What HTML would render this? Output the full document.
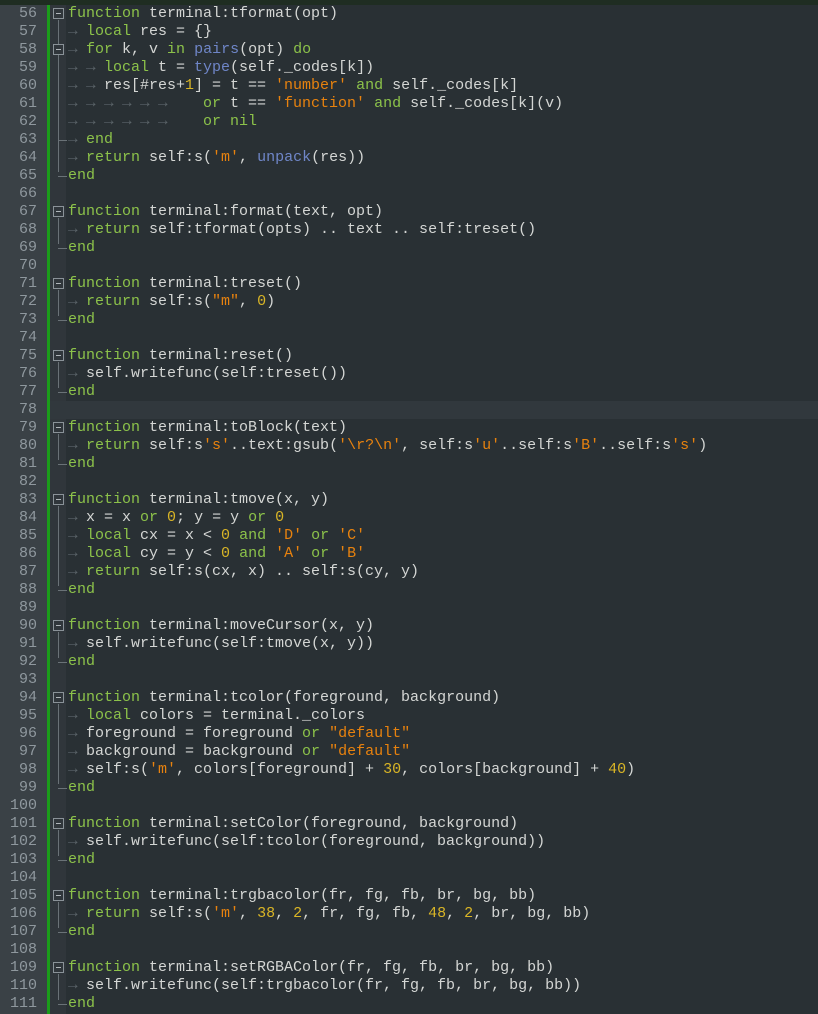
<!DOCTYPE html>
<html><head><meta charset="utf-8"><style>
body{margin:0;width:818px;height:1014px;background:#293034;overflow:hidden;position:relative;font-family:"Liberation Mono",monospace;font-size:15px}
#top{position:absolute;left:0;top:0;width:818px;height:5px;background:#1f2d22}
#gut{position:absolute;left:0;top:5px;width:47px;height:1009px;background:#3a4146}
#bar{position:absolute;left:47px;top:5px;width:3px;height:1009px;background:#1a9c1a}
#fold{position:absolute;left:50px;top:5px;width:16px;height:1009px;background:#30363b}
#hl{position:absolute;left:50px;top:401px;width:768px;height:18px;background:#31383d}
.r{position:absolute;left:0;height:18px;line-height:18px;white-space:pre;color:#d4d6d4}
.ln{position:absolute;left:0;width:37px;text-align:right;color:#8f989e}
.c{position:absolute;left:68px}
.k{color:#8cc24a}.s{color:#e8820e}.n{color:#d9b526}.b{color:#6f86c8}
.t{display:inline-block;width:18px;height:18px;line-height:17px;color:#5b6469;font-size:16px;overflow:hidden;vertical-align:top}
.bx{position:absolute;left:53px;width:9px;height:9px;border:1px solid #8a9298;background:#30363b}
.bx:after{content:"";position:absolute;left:2px;top:4px;width:5px;height:1px;background:#b0b6ba}
.vl{position:absolute;left:58px;width:1px;background:#6a7277}
.hz{position:absolute;left:58px;width:9px;height:1px;background:#6a7277}
</style></head><body>
<div id="top"></div><div id="gut"></div><div id="bar"></div><div id="fold"></div><div id="hl"></div>

<div class="vl" style="top:20px;height:152px"></div><div class="hz" style="top:176px"></div>
<div class="hz" style="top:140px"></div>
<div class="bx" style="top:8px"></div><div class="bx" style="top:44px"></div>

<div class="vl" style="top:218px;height:26px"></div><div class="hz" style="top:248px"></div><div class="bx" style="top:206px"></div>
<div class="vl" style="top:290px;height:26px"></div><div class="hz" style="top:320px"></div><div class="bx" style="top:278px"></div>
<div class="vl" style="top:362px;height:26px"></div><div class="hz" style="top:392px"></div><div class="bx" style="top:350px"></div>
<div class="vl" style="top:434px;height:26px"></div><div class="hz" style="top:464px"></div><div class="bx" style="top:422px"></div>
<div class="vl" style="top:506px;height:80px"></div><div class="hz" style="top:590px"></div><div class="bx" style="top:494px"></div>
<div class="vl" style="top:632px;height:26px"></div><div class="hz" style="top:662px"></div><div class="bx" style="top:620px"></div>
<div class="vl" style="top:704px;height:80px"></div><div class="hz" style="top:788px"></div><div class="bx" style="top:692px"></div>
<div class="vl" style="top:830px;height:26px"></div><div class="hz" style="top:860px"></div><div class="bx" style="top:818px"></div>
<div class="vl" style="top:902px;height:26px"></div><div class="hz" style="top:932px"></div><div class="bx" style="top:890px"></div>
<div class="vl" style="top:974px;height:26px"></div><div class="hz" style="top:1004px"></div><div class="bx" style="top:962px"></div>

<div class="r" style="top:5px"><span class="ln">56</span><span class="c"><span class="k">function</span> terminal:tformat(opt)</span></div>
<div class="r" style="top:23px"><span class="ln">57</span><span class="c"><span class="t">→</span><span class="k">local</span> res = {}</span></div>
<div class="r" style="top:41px"><span class="ln">58</span><span class="c"><span class="t">→</span><span class="k">for</span> k, v <span class="k">in</span> <span class="b">pairs</span>(opt) <span class="k">do</span></span></div>
<div class="r" style="top:59px"><span class="ln">59</span><span class="c"><span class="t">→</span><span class="t">→</span><span class="k">local</span> t = <span class="b">type</span>(self._codes[k])</span></div>
<div class="r" style="top:77px"><span class="ln">60</span><span class="c"><span class="t">→</span><span class="t">→</span>res[#res+<span class="n">1</span>] = t == <span class="s">'number'</span> <span class="k">and</span> self._codes[k]</span></div>
<div class="r" style="top:95px"><span class="ln">61</span><span class="c"><span class="t">→</span><span class="t">→</span><span class="t">→</span><span class="t">→</span><span class="t">→</span><span class="t">→</span>   <span class="k">or</span> t == <span class="s">'function'</span> <span class="k">and</span> self._codes[k](v)</span></div>
<div class="r" style="top:113px"><span class="ln">62</span><span class="c"><span class="t">→</span><span class="t">→</span><span class="t">→</span><span class="t">→</span><span class="t">→</span><span class="t">→</span>   <span class="k">or</span> <span class="k">nil</span></span></div>
<div class="r" style="top:131px"><span class="ln">63</span><span class="c"><span class="t">→</span><span class="k">end</span></span></div>
<div class="r" style="top:149px"><span class="ln">64</span><span class="c"><span class="t">→</span><span class="k">return</span> self:s(<span class="s">'m'</span>, <span class="b">unpack</span>(res))</span></div>
<div class="r" style="top:167px"><span class="ln">65</span><span class="c"><span class="k">end</span></span></div>
<div class="r" style="top:185px"><span class="ln">66</span></div>
<div class="r" style="top:203px"><span class="ln">67</span><span class="c"><span class="k">function</span> terminal:format(text, opt)</span></div>
<div class="r" style="top:221px"><span class="ln">68</span><span class="c"><span class="t">→</span><span class="k">return</span> self:tformat(opts) .. text .. self:treset()</span></div>
<div class="r" style="top:239px"><span class="ln">69</span><span class="c"><span class="k">end</span></span></div>
<div class="r" style="top:257px"><span class="ln">70</span></div>
<div class="r" style="top:275px"><span class="ln">71</span><span class="c"><span class="k">function</span> terminal:treset()</span></div>
<div class="r" style="top:293px"><span class="ln">72</span><span class="c"><span class="t">→</span><span class="k">return</span> self:s(<span class="s">"m"</span>, <span class="n">0</span>)</span></div>
<div class="r" style="top:311px"><span class="ln">73</span><span class="c"><span class="k">end</span></span></div>
<div class="r" style="top:329px"><span class="ln">74</span></div>
<div class="r" style="top:347px"><span class="ln">75</span><span class="c"><span class="k">function</span> terminal:reset()</span></div>
<div class="r" style="top:365px"><span class="ln">76</span><span class="c"><span class="t">→</span>self.writefunc(self:treset())</span></div>
<div class="r" style="top:383px"><span class="ln">77</span><span class="c"><span class="k">end</span></span></div>
<div class="r" style="top:401px"><span class="ln">78</span></div>
<div class="r" style="top:419px"><span class="ln">79</span><span class="c"><span class="k">function</span> terminal:toBlock(text)</span></div>
<div class="r" style="top:437px"><span class="ln">80</span><span class="c"><span class="t">→</span><span class="k">return</span> self:s<span class="s">'s'</span>..text:gsub(<span class="s">'\r?\n'</span>, self:s<span class="s">'u'</span>..self:s<span class="s">'B'</span>..self:s<span class="s">'s'</span>)</span></div>
<div class="r" style="top:455px"><span class="ln">81</span><span class="c"><span class="k">end</span></span></div>
<div class="r" style="top:473px"><span class="ln">82</span></div>
<div class="r" style="top:491px"><span class="ln">83</span><span class="c"><span class="k">function</span> terminal:tmove(x, y)</span></div>
<div class="r" style="top:509px"><span class="ln">84</span><span class="c"><span class="t">→</span>x = x <span class="k">or</span> <span class="n">0</span>; y = y <span class="k">or</span> <span class="n">0</span></span></div>
<div class="r" style="top:527px"><span class="ln">85</span><span class="c"><span class="t">→</span><span class="k">local</span> cx = x &lt; <span class="n">0</span> <span class="k">and</span> <span class="s">'D'</span> <span class="k">or</span> <span class="s">'C'</span></span></div>
<div class="r" style="top:545px"><span class="ln">86</span><span class="c"><span class="t">→</span><span class="k">local</span> cy = y &lt; <span class="n">0</span> <span class="k">and</span> <span class="s">'A'</span> <span class="k">or</span> <span class="s">'B'</span></span></div>
<div class="r" style="top:563px"><span class="ln">87</span><span class="c"><span class="t">→</span><span class="k">return</span> self:s(cx, x) .. self:s(cy, y)</span></div>
<div class="r" style="top:581px"><span class="ln">88</span><span class="c"><span class="k">end</span></span></div>
<div class="r" style="top:599px"><span class="ln">89</span></div>
<div class="r" style="top:617px"><span class="ln">90</span><span class="c"><span class="k">function</span> terminal:moveCursor(x, y)</span></div>
<div class="r" style="top:635px"><span class="ln">91</span><span class="c"><span class="t">→</span>self.writefunc(self:tmove(x, y))</span></div>
<div class="r" style="top:653px"><span class="ln">92</span><span class="c"><span class="k">end</span></span></div>
<div class="r" style="top:671px"><span class="ln">93</span></div>
<div class="r" style="top:689px"><span class="ln">94</span><span class="c"><span class="k">function</span> terminal:tcolor(foreground, background)</span></div>
<div class="r" style="top:707px"><span class="ln">95</span><span class="c"><span class="t">→</span><span class="k">local</span> colors = terminal._colors</span></div>
<div class="r" style="top:725px"><span class="ln">96</span><span class="c"><span class="t">→</span>foreground = foreground <span class="k">or</span> <span class="s">"default"</span></span></div>
<div class="r" style="top:743px"><span class="ln">97</span><span class="c"><span class="t">→</span>background = background <span class="k">or</span> <span class="s">"default"</span></span></div>
<div class="r" style="top:761px"><span class="ln">98</span><span class="c"><span class="t">→</span>self:s(<span class="s">'m'</span>, colors[foreground] + <span class="n">30</span>, colors[background] + <span class="n">40</span>)</span></div>
<div class="r" style="top:779px"><span class="ln">99</span><span class="c"><span class="k">end</span></span></div>
<div class="r" style="top:797px"><span class="ln">100</span></div>
<div class="r" style="top:815px"><span class="ln">101</span><span class="c"><span class="k">function</span> terminal:setColor(foreground, background)</span></div>
<div class="r" style="top:833px"><span class="ln">102</span><span class="c"><span class="t">→</span>self.writefunc(self:tcolor(foreground, background))</span></div>
<div class="r" style="top:851px"><span class="ln">103</span><span class="c"><span class="k">end</span></span></div>
<div class="r" style="top:869px"><span class="ln">104</span></div>
<div class="r" style="top:887px"><span class="ln">105</span><span class="c"><span class="k">function</span> terminal:trgbacolor(fr, fg, fb, br, bg, bb)</span></div>
<div class="r" style="top:905px"><span class="ln">106</span><span class="c"><span class="t">→</span><span class="k">return</span> self:s(<span class="s">'m'</span>, <span class="n">38</span>, <span class="n">2</span>, fr, fg, fb, <span class="n">48</span>, <span class="n">2</span>, br, bg, bb)</span></div>
<div class="r" style="top:923px"><span class="ln">107</span><span class="c"><span class="k">end</span></span></div>
<div class="r" style="top:941px"><span class="ln">108</span></div>
<div class="r" style="top:959px"><span class="ln">109</span><span class="c"><span class="k">function</span> terminal:setRGBAColor(fr, fg, fb, br, bg, bb)</span></div>
<div class="r" style="top:977px"><span class="ln">110</span><span class="c"><span class="t">→</span>self.writefunc(self:trgbacolor(fr, fg, fb, br, bg, bb))</span></div>
<div class="r" style="top:995px"><span class="ln">111</span><span class="c"><span class="k">end</span></span></div>
</body></html>
